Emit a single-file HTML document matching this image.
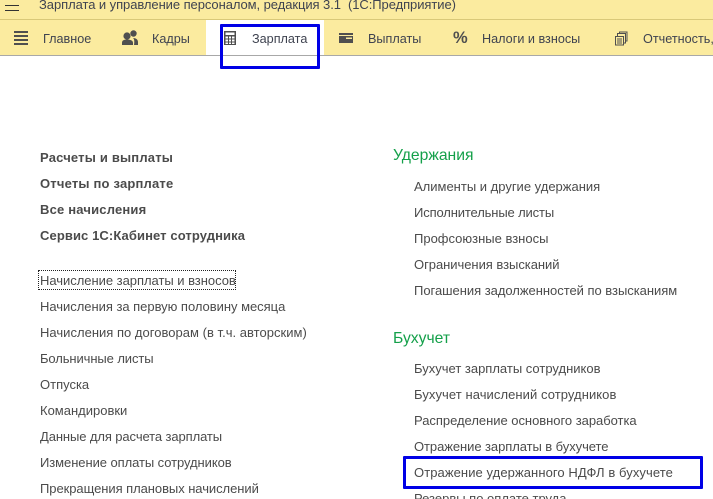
<!DOCTYPE html>
<html><head><meta charset="utf-8">
<style>
html,body{margin:0;padding:0;background:#fff;}
#p{position:relative;width:713px;height:499px;overflow:hidden;background:#fff;font-family:"Liberation Sans",Arial,sans-serif;font-size:13px;color:#4b4b4b;}
#p div{position:absolute;}
.t{white-space:nowrap;line-height:16px;}
.b{font-weight:bold;letter-spacing:.19px;}
.g{color:#14a04a;font-size:15.7px;line-height:20px;white-space:nowrap;}
.n{color:#3f4350;font-size:12.65px;line-height:16px;white-space:nowrap;top:31px;}
</style></head><body>
<div id="p">
<div style="left:0;top:0;width:713px;height:19px;background:#fbeb9f;"></div>
<div style="left:0;top:19px;width:713px;height:1px;background:#d9c878;"></div>
<div style="left:0;top:20px;width:713px;height:36px;background:#fbeb9f;"></div>
<div style="left:206px;top:20px;width:118px;height:36px;background:#fff;"></div>
<div style="left:0;top:55px;width:713px;height:1px;background:#a8a8a8;"></div>
<div style="left:5px;top:5px;width:14px;height:1px;background:#333;"></div>
<div style="left:5px;top:10px;width:14px;height:1px;background:#333;"></div>
<div class="t" style="left:39px;top:-3px;font-size:13px;letter-spacing:-.07px;color:#3f4350;">Зарплата и управление персоналом, редакция 3.1&nbsp; (1С:Предприятие)</div>

<svg style="position:absolute;left:0;top:0;" width="713" height="60">
<g fill="#4f4f4f">
<rect x="14" y="31" width="14" height="2"/><rect x="14" y="35" width="14" height="2"/><rect x="14" y="39" width="14" height="2"/><rect x="14" y="43" width="14" height="2"/>
<circle cx="127" cy="36" r="3.600"/><path d="M122 45v-2c0-2.500 1.500-3.500 5-3.500s6 1 6 3.500v2z"/>
<circle cx="133.500" cy="33.500" r="3.200"/><path d="M134 45h4v-3c0-2-1.500-4-5-4 1.500 1 1.500 4 1 7z"/>
<path fill-rule="evenodd" d="M224 31h12v14h-12zM225.500 32.500v2.500h9v-2.500zM225.500 36.500v2h2.500v-2zM229 36.500v2h2v-2zM232 36.500v2h2.500v-2zM225.500 39.500v2h2.500v-2zM229 39.500v2h2v-2zM232 39.500v2h2.500v-2zM225.500 42.500v1.500h2.500v-1.500zM229 42.500v1.500h2v-1.500zM232 42.500v1.500h2.500v-1.500z"/>
<path fill-rule="evenodd" d="M339 33h14v10h-14zM346 37.500v1.500h6v-1.500z"/><rect x="339" y="35" width="14" height="1" fill="#fbeb9f"/>
</g>
<g fill="none" stroke="#4f4f4f" stroke-width="1">
<rect x="615.500" y="36.500" width="8" height="8.500"/><path d="M617.500 36v-2.500h8v9.500h-2M619.500 33v-1h7.500v9h-1.500M617 39h5M617 41h5M617 43h5"/>
</g>
</svg>
<div class="b" style="left:453px;top:28px;font-size:16.500px;line-height:20px;letter-spacing:0;color:#4f4f4f;">%</div>

<div class="n" style="left:43px;">Главное</div>
<div class="n" style="left:152px;">Кадры</div>
<div class="n" style="left:252px;">Зарплата</div>
<div class="n" style="left:368px;">Выплаты</div>
<div class="n" style="left:482px;">Налоги и взносы</div>
<div class="n" style="left:643px;">Отчетность, справки</div>

<div style="left:220px;top:24px;width:94px;height:39px;border:3px solid #0000e6;border-radius:1px;"></div>

<div class="t b" style="left:40px;top:150px;">Расчеты и выплаты</div>
<div class="t b" style="left:40px;top:176px;">Отчеты по зарплате</div>
<div class="t b" style="left:40px;top:202px;">Все начисления</div>
<div class="t b" style="left:40px;top:228px;letter-spacing:.1px;">Сервис 1С:Кабинет сотрудника</div>

<div style="left:38px;top:270px;width:196px;height:18px;border:1px dotted #222;"></div>
<div class="t" style="left:40px;top:273px;letter-spacing:-.03px;">Начисление зарплаты и взносов</div>
<div class="t" style="left:40px;top:299px;letter-spacing:-.03px;">Начисления за первую половину месяца</div>
<div class="t" style="left:40px;top:325px;letter-spacing:.02px;">Начисления по договорам (в т.ч. авторским)</div>
<div class="t" style="left:40px;top:351px;letter-spacing:-.1px;">Больничные листы</div>
<div class="t" style="left:40px;top:377px;">Отпуска</div>
<div class="t" style="left:40px;top:403px;">Командировки</div>
<div class="t" style="left:40px;top:429px;letter-spacing:-.1px;">Данные для расчета зарплаты</div>
<div class="t" style="left:40px;top:455px;letter-spacing:-.07px;">Изменение оплаты сотрудников</div>
<div class="t" style="left:40px;top:481px;letter-spacing:-.06px;">Прекращения плановых начислений</div>

<div class="g" style="left:393px;top:146px;">Удержания</div>
<div class="t" style="left:414px;top:179px;">Алименты и другие удержания</div>
<div class="t" style="left:414px;top:205px;letter-spacing:-.14px;">Исполнительные листы</div>
<div class="t" style="left:414px;top:231px;">Профсоюзные взносы</div>
<div class="t" style="left:414px;top:257px;letter-spacing:-.04px;">Ограничения взысканий</div>
<div class="t" style="left:414px;top:283px;letter-spacing:-.03px;">Погашения задолженностей по взысканиям</div>

<div class="g" style="left:393px;top:329px;">Бухучет</div>
<div class="t" style="left:414px;top:361px;">Бухучет зарплаты сотрудников</div>
<div class="t" style="left:414px;top:387px;letter-spacing:.07px;">Бухучет начислений сотрудников</div>
<div class="t" style="left:414px;top:413px;letter-spacing:-.03px;">Распределение основного заработка</div>
<div class="t" style="left:414px;top:439px;letter-spacing:-.07px;">Отражение зарплаты в бухучете</div>
<div class="t" style="left:414px;top:465px;letter-spacing:.08px;">Отражение удержанного НДФЛ в бухучете</div>
<div class="t" style="left:414px;top:491px;">Резервы по оплате труда</div>
<div style="left:403px;top:456px;width:294px;height:27px;border:3px solid #0000e6;border-radius:1px;"></div>
</div>
</body></html>
